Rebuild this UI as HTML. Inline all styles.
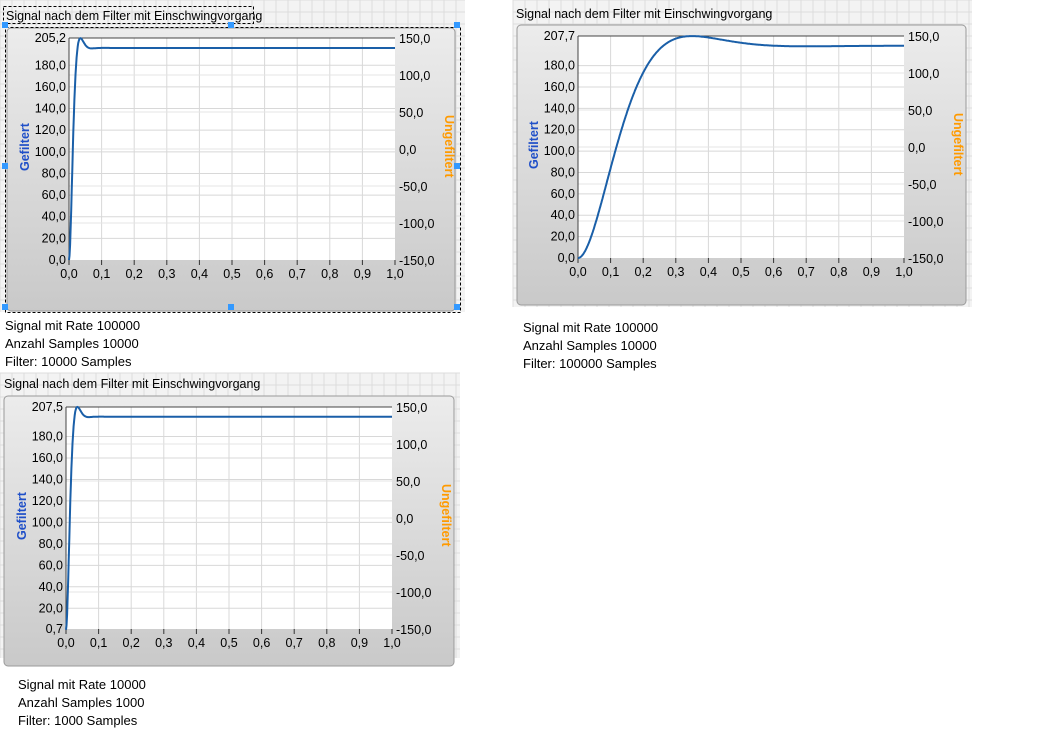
<!DOCTYPE html>
<html><head><meta charset="utf-8"><style>
body{margin:0;width:1055px;height:740px;background:#fff;position:relative;overflow:hidden;font-family:"Liberation Sans",sans-serif}
.t{position:absolute;font-size:13px;line-height:18px;color:#000}
svg{position:absolute;left:0;top:0}
</style></head><body>
<svg id="s" width="1055" height="740" xmlns="http://www.w3.org/2000/svg" font-family="Liberation Sans, sans-serif"></svg>
<div class="t" style="left:5px;top:317px">Signal mit Rate 100000<br>Anzahl Samples 10000<br>Filter: 10000 Samples</div>
<div class="t" style="left:523px;top:319px">Signal mit Rate 100000<br>Anzahl Samples 10000<br>Filter: 100000 Samples</div>
<div class="t" style="left:18px;top:676px">Signal mit Rate 10000<br>Anzahl Samples 1000<br>Filter: 1000 Samples</div>
<script>
var s=document.getElementById('s'),h='';
h+='<defs><linearGradient id="g" x1="0" y1="0" x2="0" y2="1"><stop offset="0" stop-color="#ececec"/><stop offset="1" stop-color="#c9c9c9"/></linearGradient></defs>';
function bg(x0,y0,x1,y1){h+='<rect x="'+x0+'" y="'+y0+'" width="'+(x1-x0)+'" height="'+(y1-y0)+'" fill="#f3f3f3"/>';
for(var x=x0;x<x1;x+=12)h+='<line x1="'+x+'" y1="'+y0+'" x2="'+x+'" y2="'+y1+'" stroke="#dcdcdc"/>';
for(var y=y0;y<y1;y+=12)h+='<line x1="'+x0+'" y1="'+y+'" x2="'+x1+'" y2="'+y+'" stroke="#dcdcdc"/>';}
function chart(o){var px=o.px,py=o.py,W=326,H=222;
h+='<rect x="'+o.fx+'" y="'+o.fy+'" width="'+o.fw+'" height="'+o.fh+'" rx="4" fill="url(#g)" stroke="#9a9a9a"/>';
h+='<rect x="'+px+'" y="'+py+'" width="'+W+'" height="'+H+'" fill="#fff"/>';
for(var i=1;i<10;i++){var x=px+W*i/10;h+='<line x1="'+x+'" y1="'+py+'" x2="'+x+'" y2="'+(py+H)+'" stroke="#d8d8d8"/>';}
var L=[180,160,140,120,100,80,60,40,20];
L.forEach(function(v){var y=py+H-(v-o.min)/(o.max-o.min)*H;h+='<line x1="'+px+'" y1="'+y+'" x2="'+(px+W)+'" y2="'+y+'" stroke="#d8d8d8"/>';});
for(var j=1;j<6;j++){var y=py+H*j/6;h+='<line x1="'+px+'" y1="'+y+'" x2="'+(px+W)+'" y2="'+y+'" stroke="#e4e4e4"/>';}
h+='<line x1="'+px+'" y1="'+py+'" x2="'+(px+W)+'" y2="'+py+'" stroke="#444"/><line x1="'+px+'" y1="'+py+'" x2="'+px+'" y2="'+(py+H)+'" stroke="#444"/>';
var lab=[[o.max,o.maxs]].concat(L.map(function(v){return[v,v+',0']})).concat([[o.min,o.mins]]);
lab.forEach(function(a){var y=py+H-(a[0]-o.min)/(o.max-o.min)*H;h+='<text x="'+(px-3)+'" y="'+(y+4)+'" font-size="12.5" text-anchor="end">'+a[1]+'</text>';});
['150,0','100,0','50,0','0,0','-50,0','-100,0','-150,0'].forEach(function(t,k){var y=py+H*k/6;h+='<text x="'+(px+W+4)+'" y="'+(y+5)+'" font-size="12.5">'+t+'</text>';});
for(var i=0;i<=10;i++){var x=px+W*i/10;h+='<line x1="'+x+'" y1="'+(py+H)+'" x2="'+x+'" y2="'+(py+H+5)+'" stroke="#333"/><text x="'+x+'" y="'+(py+H+18)+'" font-size="12.5" text-anchor="middle">'+(i==10?'1,0':'0,'+i)+'</text>';}
h+='<text transform="translate('+(px-40)+','+(py+H/2+22)+') rotate(-90)" font-size="12.5" font-weight="bold" fill="#1f4fc8">Gefiltert</text>';
h+='<text transform="translate('+(px+W+50)+','+(py+H/2-34)+') rotate(90)" font-size="12.5" font-weight="bold" fill="#ff9a00">Ungefiltert</text>';
var d='';for(var k=0;k<=600;k++){var t=k/600,v=o.f(t);var x=px+t*W,y=py+H-(v-o.min)/(o.max-o.min)*H;d+=(k?'L':'M')+x.toFixed(1)+' '+y.toFixed(1);}
h+='<path d="'+d+'" fill="none" stroke="#1a5fa8" stroke-width="2"/>';
h+='<text x="'+o.tx+'" y="'+o.ty+'" font-size="12.5">Signal nach dem Filter mit Einschwingvorgang</text>';}
function step(tp,st){var z=0.7,wd=Math.PI/tp,wn=wd/Math.sqrt(1-z*z);return function(t){var e=Math.exp(-z*wn*t);return st*(1-e*(Math.cos(wd*t)+z/Math.sqrt(1-z*z)*Math.sin(wd*t)));};}
bg(0,0,465,312);bg(513,0,972,307);bg(0,373,460,658);
chart({px:69,py:38,fx:7,fy:28,fw:448,fh:283,max:205.2,maxs:'205,2',min:0,mins:'0,0',tx:6,ty:20,f:step(0.035,196)});
chart({px:578,py:36,fx:517,fy:25,fw:449,fh:280,max:207.7,maxs:'207,7',min:0,mins:'0,0',tx:516,ty:18,f:step(0.35,198.5)});
chart({px:66,py:407,fx:4,fy:396,fw:450,fh:270,max:207.5,maxs:'207,5',min:0.7,mins:'0,7',tx:4,ty:388,f:step(0.035,198.5)});
h+='<rect x="3.5" y="6.5" width="250" height="17" fill="none" stroke="#000" stroke-dasharray="3,2"/>';
h+='<rect x="5.5" y="27.5" width="455" height="285" fill="none" stroke="#000" stroke-dasharray="3,2"/>';
[[5,25],[231,25],[457,25],[5,166],[457,166],[5,307],[231,307],[457,307]].forEach(function(p){h+='<rect x="'+(p[0]-3)+'" y="'+(p[1]-3)+'" width="6" height="6" fill="#3399ff"/>';});
s.innerHTML=h;
</script>
</body></html>
